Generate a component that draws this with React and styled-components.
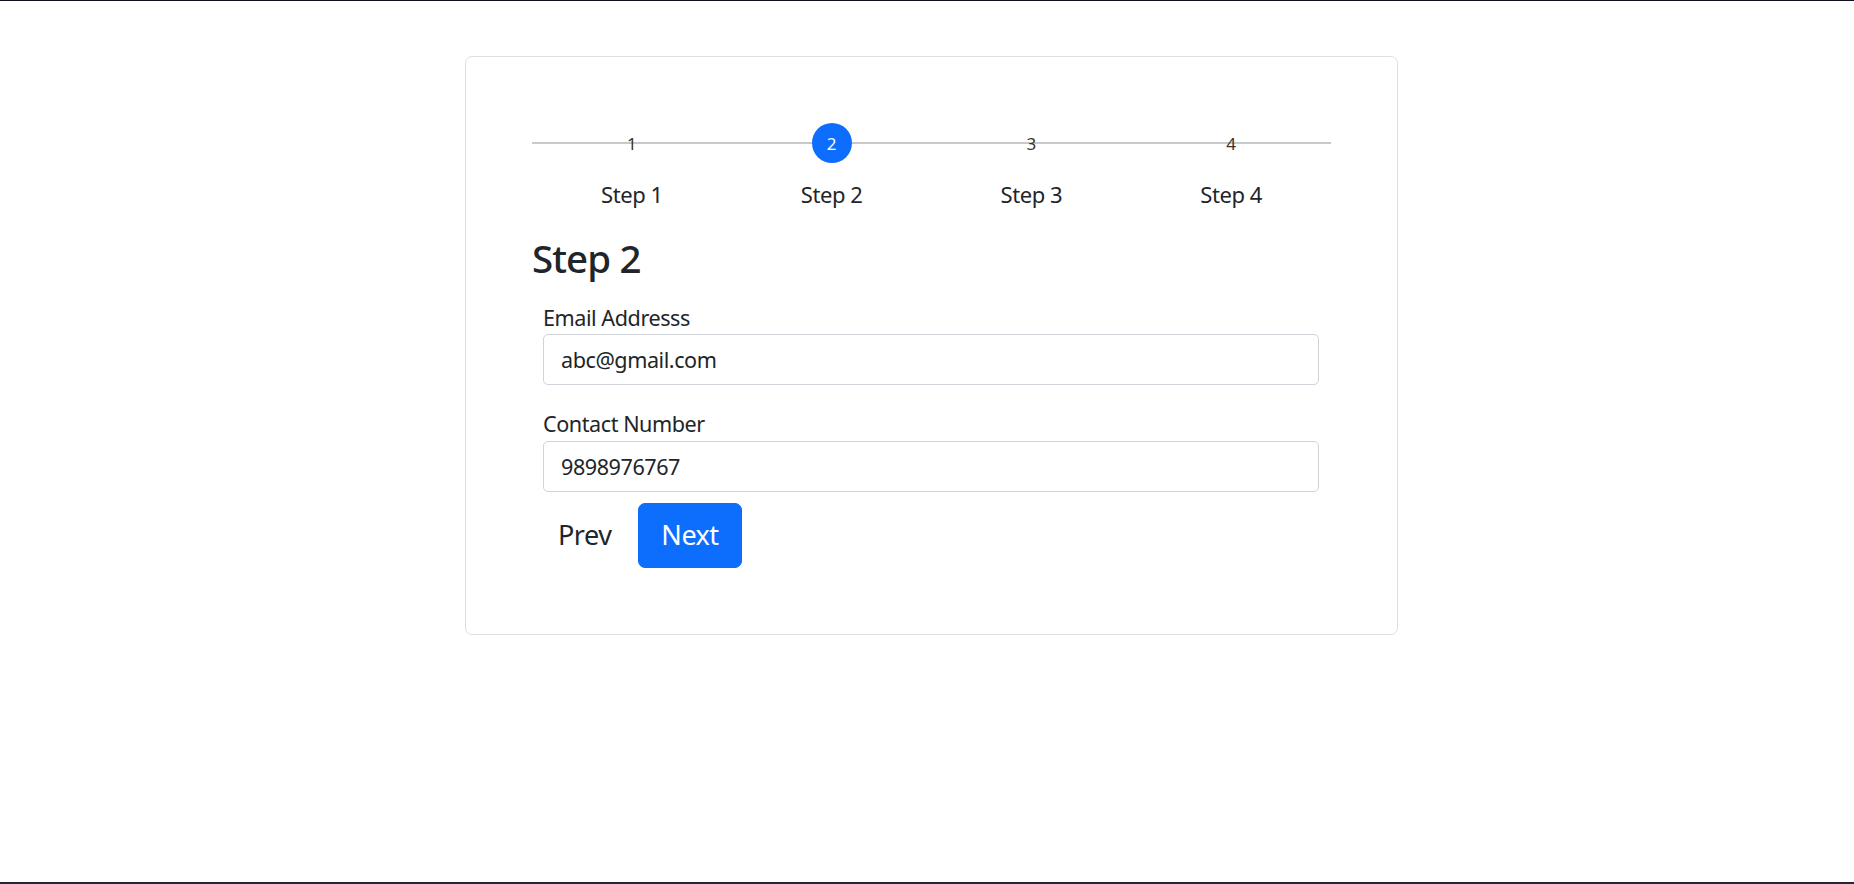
import React, { useState } from "react";
import styled, { createGlobalStyle } from "styled-components";

const GlobalStyle = createGlobalStyle`
  * { box-sizing: border-box; }
  html, body { margin: 0; padding: 0; background: #fff; }
  body {
    font-family: "Noto Sans", "Open Sans", Arial, sans-serif;
    color: #212529;
    letter-spacing: -0.45px;
  }
`;

const Page = styled.div`
  min-height: 884px;
  border-top: 1px solid #10111f;
  border-bottom: 2px solid #26263a;
  padding: 55px 0 0 9px;
  display: flex;
  justify-content: center;
  align-items: flex-start;
`;

const Card = styled.div`
  width: 933px;
  border: 1px solid #dfdfdf;
  border-radius: 7px;
  padding: 66px 66px 66px 66px;
  background: #fff;
`;

const Stepper = styled.div`
  position: relative;
  display: grid;
  grid-template-columns: repeat(4, 1fr);
  &::before {
    content: "";
    position: absolute;
    left: 0;
    right: 0;
    top: 19px;
    height: 2px;
    background: #c9c9c9;
  }
`;

const Step = styled.div`
  position: relative;
  display: flex;
  flex-direction: column;
  align-items: center;
`;

const Circle = styled.div`
  width: 40px;
  height: 40px;
  border-radius: 50%;
  display: flex;
  align-items: center;
  justify-content: center;
  font-size: 17px;
  line-height: 1;
  letter-spacing: 0;
  background: ${(p) => (p.$active ? "#0d6efd" : "transparent")};
  color: ${(p) => (p.$active ? "#fff" : "#3a3326")};
`;

const StepLabel = styled.div`
  margin-top: 15px;
  font-size: 22px;
  line-height: 33px;
  color: #212529;
`;

const Heading = styled.h3`
  margin: 24px 0 21px;
  font-size: 38.5px;
  line-height: 46px;
  font-weight: 500;
  letter-spacing: -0.9px;
  color: #212529;
`;

const Form = styled.div`
  padding: 0 12px 0 11px;
`;

const Field = styled.div`
  margin-bottom: ${(p) => (p.$last ? "11px" : "23px")};
`;

const Label = styled.label`
  display: block;
  font-size: 21.6px;
  line-height: 32.4px;
  color: #212529;
`;

const Input = styled.input`
  display: block;
  width: 100%;
  height: 51px;
  padding: 0 17px;
  font-family: inherit;
  font-size: 21.6px;
  letter-spacing: -0.45px;
  color: #212529;
  border: 1px solid #ced4da;
  border-radius: 5px;
  outline: none;
  background: #fff;
`;

const ButtonRow = styled.div`
  display: flex;
  gap: 4px;
  margin-left: -8px;
`;

const Button = styled.button`
  font-family: inherit;
  font-size: 27px;
  line-height: 40.5px;
  letter-spacing: -0.5px;
  padding: 11.25px 22px;
  border-radius: 7px;
  border: 1px solid ${(p) => (p.$primary ? "#0d6efd" : "transparent")};
  background: ${(p) => (p.$primary ? "#0d6efd" : "transparent")};
  color: ${(p) => (p.$primary ? "#fff" : "#212529")};
  cursor: pointer;
`;

const steps = ["Step 1", "Step 2", "Step 3", "Step 4"];

export default function App() {
  const [email, setEmail] = useState("abc@gmail.com");
  const [phone, setPhone] = useState("9898976767");
  const current = 1;
  return (
    <>
      <GlobalStyle />
      <Page>
        <Card>
          <Stepper>
            {steps.map((s, i) => (
              <Step key={s}>
                <Circle $active={i === current}>{i + 1}</Circle>
                <StepLabel>{s}</StepLabel>
              </Step>
            ))}
          </Stepper>
          <Heading>Step 2</Heading>
          <Form>
            <Field>
              <Label>Email Addresss</Label>
              <Input value={email} onChange={(e) => setEmail(e.target.value)} />
            </Field>
            <Field $last>
              <Label>Contact Number</Label>
              <Input value={phone} onChange={(e) => setPhone(e.target.value)} />
            </Field>
            <ButtonRow>
              <Button>Prev</Button>
              <Button $primary>Next</Button>
            </ButtonRow>
          </Form>
        </Card>
      </Page>
    </>
  );
}
